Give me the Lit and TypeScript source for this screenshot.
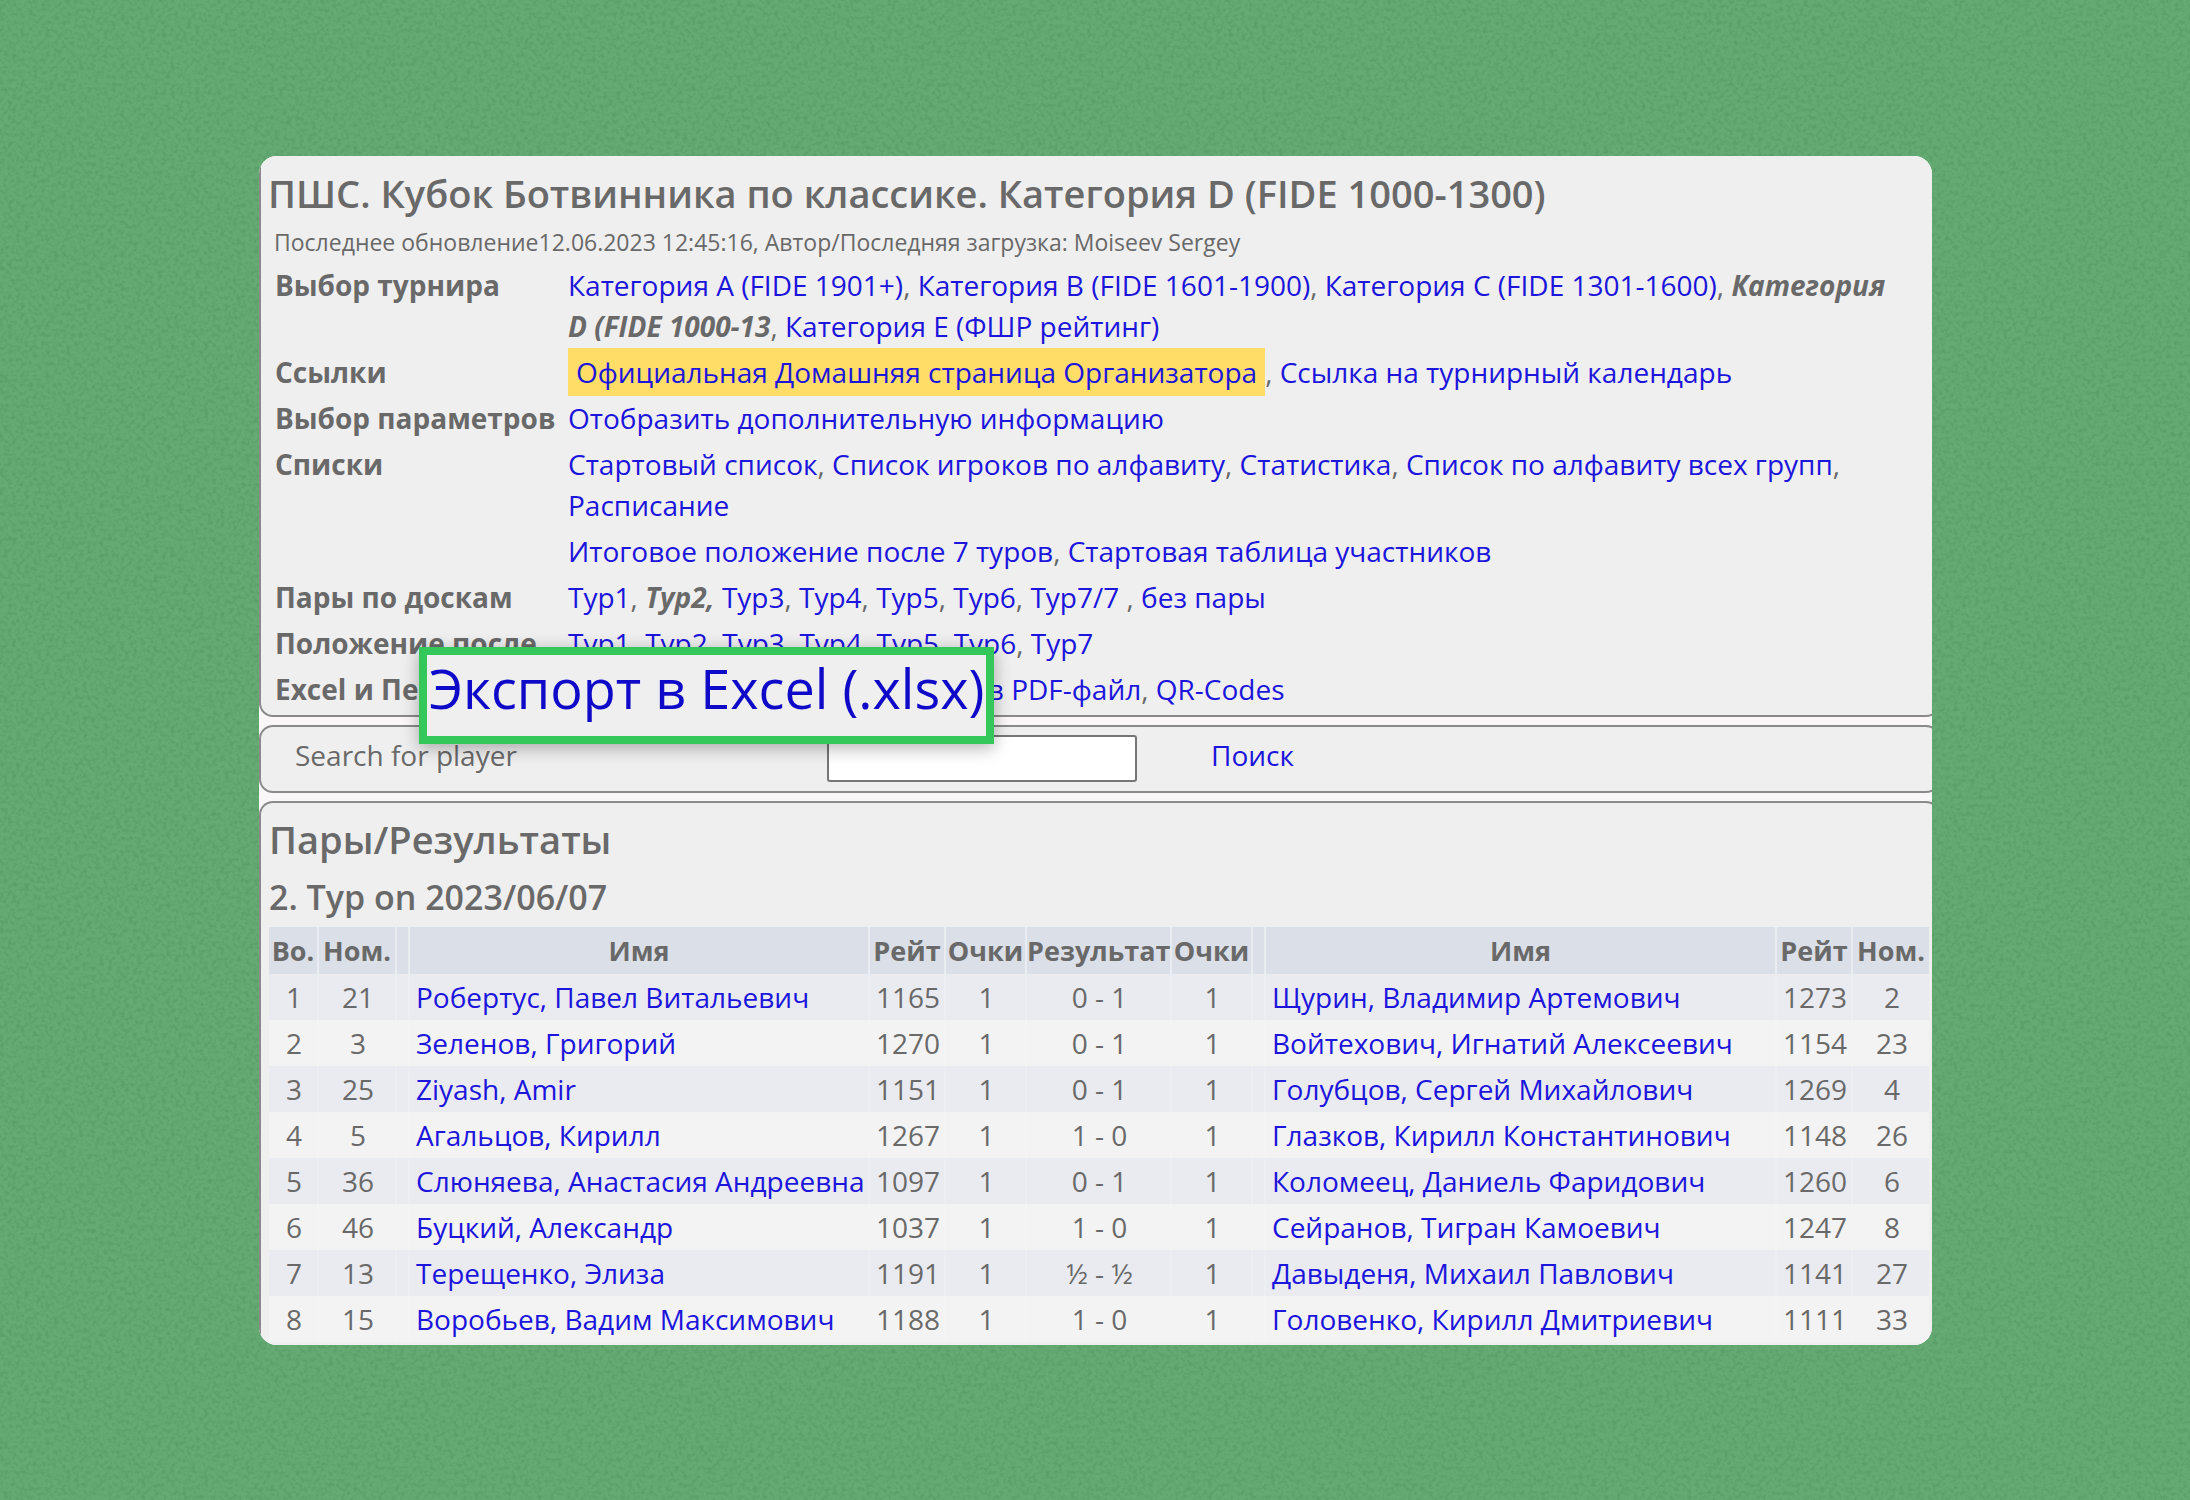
import { LitElement, html, css, nothing, TemplateResult } from "lit";
import { customElement } from "lit/decorators.js";

type Item = { text: string; kind?: "link" | "current" | "marked"; sep?: string };
type Row = { label: string; items: Item[] };

const link = (text: string, sep = ", "): Item => ({ text, kind: "link", sep });

const ROWS: Row[] = [
  {
    label: "Выбор турнира",
    items: [
      link("Категория A (FIDE 1901+)"),
      link("Категория B (FIDE 1601-1900)"),
      link("Категория C (FIDE 1301-1600)"),
      { text: "Категория D (FIDE 1000-13", kind: "current", sep: ", " },
      link("Категория E (ФШР рейтинг)", ""),
    ],
  },
  {
    label: "Ссылки",
    items: [
      { text: "Официальная Домашняя страница Организатора", kind: "marked", sep: ", " },
      link("Ссылка на турнирный календарь", ""),
    ],
  },
  { label: "Выбор параметров", items: [link("Отобразить дополнительную информацию", "")] },
  {
    label: "Списки",
    items: [
      link("Стартовый список"),
      link("Список игроков по алфавиту"),
      link("Статистика"),
      link("Список по алфавиту всех групп"),
      link("Расписание", ""),
    ],
  },
  {
    label: "",
    items: [link("Итоговое положение после 7 туров"), link("Стартовая таблица участников", "")],
  },
  {
    label: "Пары по доскам",
    items: [
      link("Тур1"),
      { text: "Тур2,", kind: "current", sep: " " },
      link("Тур3"),
      link("Тур4"),
      link("Тур5"),
      link("Тур6"),
      link("Тур7/7", " , "),
      link("без пары", ""),
    ],
  },
  {
    label: "Положение после",
    items: [link("Тур1"), link("Тур2"), link("Тур3"), link("Тур4"), link("Тур5"), link("Тур6"), link("Тур7", "")],
  },
  {
    label: "Excel и Печать",
    items: [link("Экспорт в Excel (.xlsx)"), link("Экспорт в PDF-файл"), link("QR-Codes", "")],
  },
];

type Player = [number, string, number];
type Pairing = { board: number; white: Player; result: string; black: Player };

const PAIRINGS: Pairing[] = [
  { board: 1, white: [21, "Робертус, Павел Витальевич", 1165], result: "0 - 1", black: [2, "Щурин, Владимир Артемович", 1273] },
  { board: 2, white: [3, "Зеленов, Григорий", 1270], result: "0 - 1", black: [23, "Войтехович, Игнатий Алексеевич", 1154] },
  { board: 3, white: [25, "Ziyash, Amir", 1151], result: "0 - 1", black: [4, "Голубцов, Сергей Михайлович", 1269] },
  { board: 4, white: [5, "Агальцов, Кирилл", 1267], result: "1 - 0", black: [26, "Глазков, Кирилл Константинович", 1148] },
  { board: 5, white: [36, "Слюняева, Анастасия Андреевна", 1097], result: "0 - 1", black: [6, "Коломеец, Даниель Фаридович", 1260] },
  { board: 6, white: [46, "Буцкий, Александр", 1037], result: "1 - 0", black: [8, "Сейранов, Тигран Камоевич", 1247] },
  { board: 7, white: [13, "Терещенко, Элиза", 1191], result: "½ - ½", black: [27, "Давыденя, Михаил Павлович", 1141] },
  { board: 8, white: [15, "Воробьев, Вадим Максимович", 1188], result: "1 - 0", black: [33, "Головенко, Кирилл Дмитриевич", 1111] },
];

const HEADERS = ["Bo.", "Ном.", "", "Имя", "Рейт", "Очки", "Результат", "Очки", "", "Имя", "Рейт", "Ном."];
const COLUMNS = ["c-board", "c-num", "c-gap", "c-name", "c-rate", "c-pts", "c-res", "c-pts", "c-gap", "c-rest", "c-rate", "c-num"];

@customElement("tournament-links")
export class TournamentLinks extends LitElement {
  static styles = css`
    :host {
      display: block;
    }
    .links {
      border-collapse: collapse;
      width: 100%;
    }
    .label {
      width: 293px;
      padding: 3px 0 2px;
      text-align: left;
      vertical-align: top;
      font-weight: 700;
      white-space: nowrap;
    }
    .value {
      padding: 3px 20px 2px 0;
      vertical-align: top;
    }
    .link {
      color: #1c15dc;
      text-decoration: none;
    }
    .marked {
      padding: 5px 8px 5px;
      background: #ffdd66;
    }
    .current {
      font-style: italic;
      font-weight: 700;
    }
    .lead {
      position: relative;
    }
    .callout {
      position: absolute;
      left: 144px;
      top: -19px;
      border: 8px solid #34c759;
      background: #efefef;
      box-shadow: 0 4px 16px rgba(0, 0, 0, 0.3);
      padding: 0 2px 15px;
      font-size: 54px;
      font-weight: 400;
      line-height: 66px;
      color: #0f0ac8;
      text-decoration: none;
      z-index: 1;
    }
  `;

  private item(i: Item): TemplateResult {
    if (i.kind === "current") return html`<em class="current">${i.text}</em>${i.sep}`;
    const cls = i.kind === "marked" ? "link marked" : "link";
    return html`<a class=${cls} href="#">${i.text}</a>${i.sep}`;
  }

  render() {
    const last = ROWS.length - 1;
    return html`<table class="links">
      <tbody>
        ${ROWS.map(
          (r, n) => html`<tr>
            <th class=${n === last ? "label lead" : "label"} scope="row">
              ${r.label}${n === last ? html`<a class="callout" href="#">Экспорт в Excel (.xlsx)</a>` : nothing}
            </th>
            <td class="value">${r.items.map((i) => this.item(i))}</td>
          </tr>`
        )}
      </tbody>
    </table>`;
  }
}

@customElement("pairing-table")
export class PairingTable extends LitElement {
  static styles = css`
    :host {
      display: block;
    }
    .pairs {
      width: 100%;
      table-layout: fixed;
      border-collapse: separate;
      border-spacing: 0;
      text-align: center;
    }
    .c-board {
      width: 48px;
    }
    .c-num {
      width: 78px;
    }
    .c-gap {
      width: 13px;
    }
    .c-name {
      width: 460px;
    }
    .c-rate {
      width: 76px;
    }
    .c-pts {
      width: 81px;
    }
    .c-res {
      width: 145px;
    }
    .head,
    .cell {
      padding: 0;
      height: 46px;
      white-space: nowrap;
      border-left: 2px solid rgba(255, 255, 255, 0.4);
    }
    .cell {
      padding-left: 2px;
      border-left-color: rgba(255, 255, 255, 0.15);
    }
    .head:first-child,
    .cell:first-child {
      border-left: 0;
    }
    .head {
      height: 47px;
      background: #dbdfe8;
      font-size: 27px;
      font-weight: 700;
    }
    .row:nth-child(odd) {
      background: #eaebf0;
    }
    .row:nth-child(even) {
      background: #f3f3f3;
    }
    .name {
      text-align: left;
      padding-left: 6px;
    }
    .link {
      color: #1c15dc;
      text-decoration: none;
    }
  `;

  render() {
    return html`<table class="pairs">
      <colgroup>
        ${COLUMNS.map((c) => html`<col class=${c} />`)}
      </colgroup>
      <thead>
        <tr>
          ${HEADERS.map((h) => html`<th class="head" scope="col">${h}</th>`)}
        </tr>
      </thead>
      <tbody>
        ${PAIRINGS.map(
          (p) => html`<tr class="row">
            <td class="cell">${p.board}</td>
            <td class="cell">${p.white[0]}</td>
            <td class="cell"></td>
            <td class="cell name"><a class="link" href="#">${p.white[1]}</a></td>
            <td class="cell">${p.white[2]}</td>
            <td class="cell">1</td>
            <td class="cell">${p.result}</td>
            <td class="cell">1</td>
            <td class="cell"></td>
            <td class="cell name"><a class="link" href="#">${p.black[1]}</a></td>
            <td class="cell">${p.black[2]}</td>
            <td class="cell">${p.black[0]}</td>
          </tr>`
        )}
      </tbody>
    </table>`;
  }
}

@customElement("app-root")
export class AppRoot extends LitElement {
  static styles = css`
    :host {
      display: block;
      position: relative;
      box-sizing: border-box;
      min-height: 100vh;
      padding: 156px 258px 156px 259px;
      background: #65aa72;
      color: #696969;
      font-family: "Open Sans", "Noto Sans", sans-serif;
      font-size: 28px;
      line-height: 41px;
    }
    .grain {
      position: absolute;
      inset: 0;
      width: 100%;
      height: 100%;
    }
    .card {
      position: relative;
      display: flex;
      flex-direction: column;
      gap: 8px;
      overflow: hidden;
      border-radius: 18px;
      background: #faf7f8;
    }
    .panel {
      box-sizing: border-box;
      margin-right: -8px;
      border: 2px solid #8a8a8a;
      border-radius: 14px;
      background: #efefef;
    }
    .info {
      margin-top: -2px;
      padding: 13px 8px 3px 7px;
    }
    .title {
      margin: 0;
      font-size: 38px;
      font-weight: 600;
      line-height: 48px;
    }
    .updated {
      margin: 0;
      padding: 8px 0 0 6px;
      font-size: 23px;
      line-height: 34px;
    }
    .links {
      padding: 3px 0 0 7px;
    }
    .search {
      display: flex;
      align-items: flex-start;
      padding: 8px 34px 9px;
    }
    .caption {
      width: 532px;
    }
    .field {
      box-sizing: border-box;
      width: 310px;
      height: 47px;
      margin-right: 74px;
      border: 2px solid #767676;
      border-radius: 3px;
      background: #fff;
      font: inherit;
    }
    .find {
      color: #1c15dc;
      text-decoration: none;
    }
    .results {
      padding: 12px 9px 3px 8px;
      border-bottom: 0;
      border-radius: 14px 14px 0 0;
    }
    .round {
      margin: 0;
      padding: 12px 0 8px;
      font-size: 34px;
      font-weight: 600;
      line-height: 44px;
    }
  `;

  render() {
    return html`
      <svg class="grain" aria-hidden="true">
        <filter id="grain" x="0" y="0" width="100%" height="100%" color-interpolation-filters="sRGB">
          <feTurbulence type="fractalNoise" baseFrequency="0.24" numOctaves="3" seed="7" />
          <feColorMatrix values="0 0 0 0 0.2  0 0 0 0 0.45  0 0 0 0 0.28  3 0 0 0 -1.3" />
        </filter>
        <rect width="100%" height="100%" filter="url(#grain)" opacity="0.2" />
      </svg>
      <main class="card">
        <section class="panel info">
          <h1 class="title">ПШС. Кубок Ботвинника по классике. Категория D (FIDE 1000-1300)</h1>
          <p class="updated">Последнее обновление12.06.2023 12:45:16, Автор/Последняя загрузка: Moiseev Sergey</p>
          <tournament-links class="links"></tournament-links>
        </section>
        <section class="panel search">
          <label class="caption" for="player">Search for player</label>
          <input class="field" id="player" type="text" />
          <a class="find" href="#">Поиск</a>
        </section>
        <section class="panel results">
          <h2 class="title">Пары/Результаты</h2>
          <h3 class="round">2. Тур on 2023/06/07</h3>
          <pairing-table></pairing-table>
        </section>
      </main>
    `;
  }
}
